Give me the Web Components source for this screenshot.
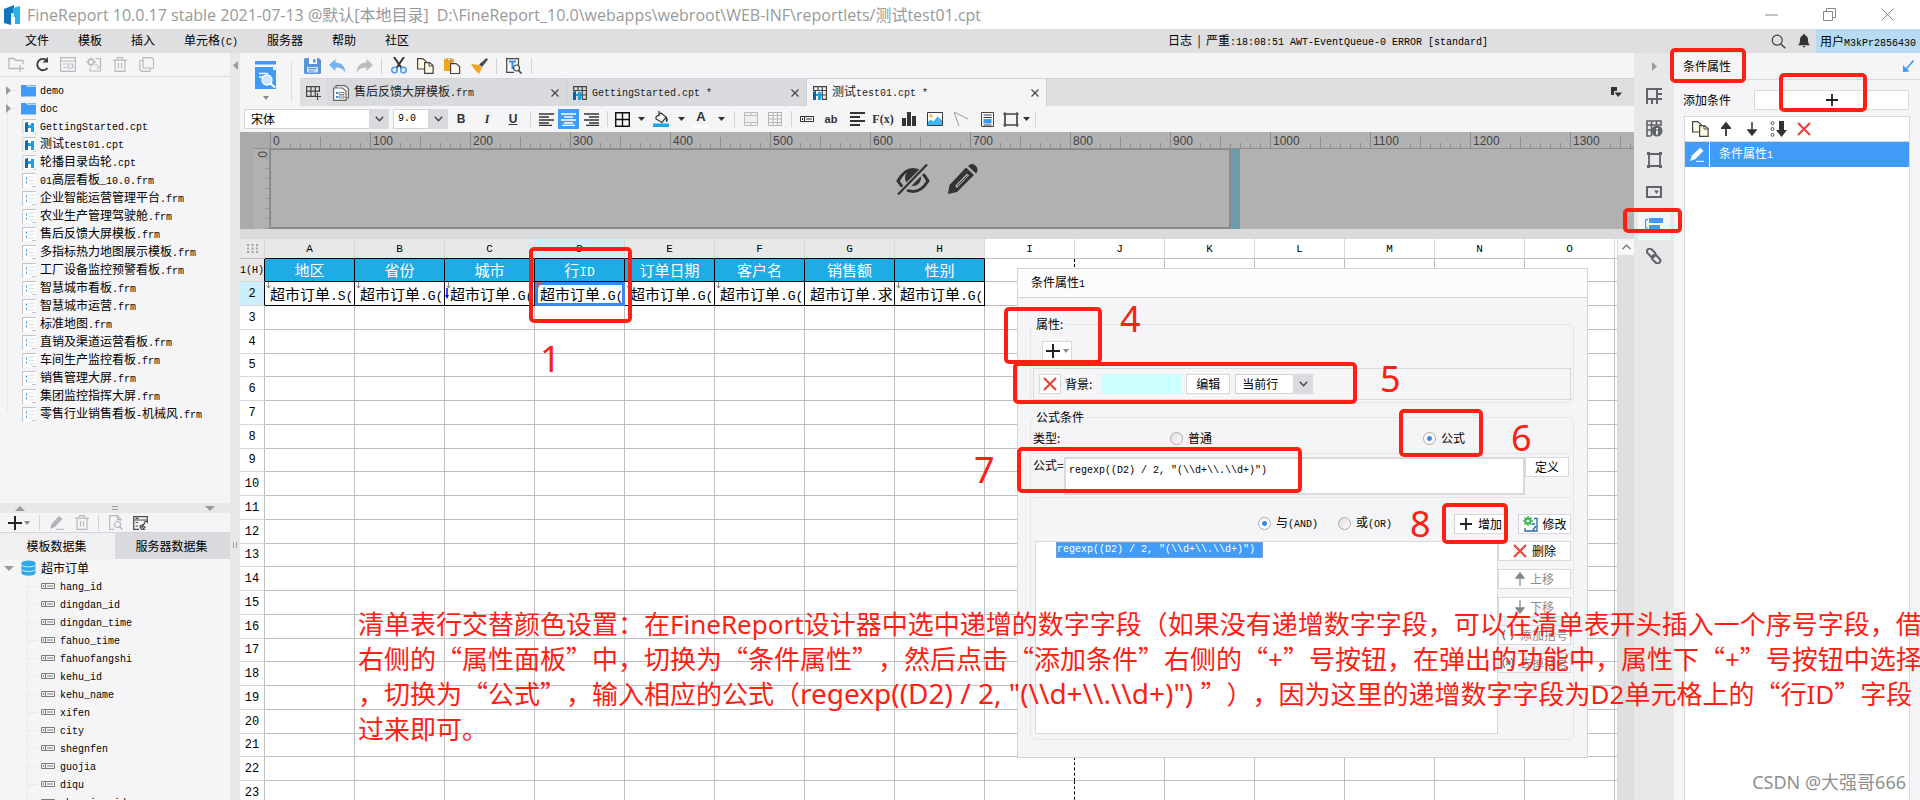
<!DOCTYPE html>
<html lang="zh-CN">
<head>
<meta charset="utf-8">
<title>FineReport</title>
<style>
html,body{margin:0;height:100%}
body{overflow:hidden;font:12px/18px "Noto Sans CJK SC","Noto Sans",sans-serif;color:#000;background:#fff}
</style>
</head>
<body>
<report-designer></report-designer>
<script>
const BASE=`
*{box-sizing:border-box}
:host{display:block}
:host([hidden]){display:none}
svg{display:block}
button,select,input,textarea{font:inherit;color:inherit;margin:0}
button{border:0;background:none;padding:0;display:flex;align-items:center;justify-content:center}
a{color:inherit;text-decoration:none}
.l{font-family:"Liberation Mono",monospace;font-size:10px;font-style:normal}
.row{display:flex;align-items:center}
`;
/* Wraps runs of ASCII in a half-width monospace span. */
const mix=s=>s.replace(/[\x21-\x7e](?:[\x20-\x7e]*[\x21-\x7e])?/g,m=>'<span class="l">'+m.replace(/&/g,'&amp;').replace(/</g,'&lt;')+'</span>');
function define(name,css,html,setup){
  customElements.define(name,class extends HTMLElement{
    connectedCallback(){
      if(this.shadowRoot)return;
      const r=this.attachShadow({mode:'open'});
      r.innerHTML='<style>'+BASE+css+'</style>'+(typeof html==='function'?html(this):html);
      if(setup)setup(r,this);
    }
  });
}

/* Icon set: [width, height, markup] */
const ICONS={
logo:[16,20,'<path d="M0 4L10 0v8H7v12L0 18z" fill="#0f76bd"/><path d="M9 3l7-2v18h-5v-7H7V8h2z" fill="#2bb0ea"/><path d="M7 8h3v12l-3-1z" fill="#fff" opacity=".75"/>'],
folder:[15,13,'<path d="M0 1h5l2 2h8v9.5H0z" fill="#419bf9"/><path d="M6 1h9v1.500H8z" fill="#79b9fb"/>'],
cpt:[14,15,'<path d="M1 15V.5h13M14 12v3h-4" fill="none" stroke="#c4c4c6"/><path d="M1.500 1H14v11l-3 2.500H1.500z" fill="#fff"/><path d="M3 4l3-1v3h3V4h3v9H9V9H6v4H3z" fill="#1f9fe0"/><path d="M3 4l3-1v10H3z" fill="#0d6cb5"/>'],
frm:[14,15,'<path d="M1.500 1H14v11l-3 2.500H1.500z" fill="#fff"/><path d="M.5 15V.5H14M14 13.500h-4" fill="none" stroke="#c4c4c6"/><path d="M6.500 4h6M6.500 7.500h6M6.500 11h6" stroke="#dedee2"/><path d="M4 4.500h1v2H4zM4 8.500h1v2H4z" fill="#2c8fe0"/>'],
field:[14,6,'<path d="M.5.5h13v5H.5zM4.500 1v4M6 3h6" fill="none" stroke="#7c7c7c"/><path d="M2 2h1v2H2z" fill="#7c7c7c"/>'],
db:[15,16,'<path d="M.5 3v10c0 3.500 14 3.500 14 0V3z" fill="#2fa6e6"/><ellipse cx="7.500" cy="3" rx="7" ry="2.500" fill="#2fa6e6"/><path d="M.5 5c1 2.500 13 2.500 14 0M.5 9.500c1 2.500 13 2.500 14 0" fill="none" stroke="#d8effb"/>'],
newdir:[16,16,'<path d="M9 12.500H1v-10h5l1.500 2H15V8M12 9v7M8.500 12.500H16" transform="translate(0 -1)" fill="none" stroke="#b9b9bd" stroke-width="1.300"/>'],
refresh:[15,15,'<path d="M12 3.500A5.700 5.700 0 1 0 12.500 11" fill="none" stroke="#3a3a3c" stroke-width="1.800"/><path d="M13 0v5.500H7.500z" fill="#3a3a3c"/>'],
winlist:[16,15,'<path d="M.7.7h14.600v13.600H.7zM.7 4h14.600M3 7h3M3 10.500h3M8 7h4.500v4H8z" fill="none" stroke="#b9b9bd" stroke-width="1.200"/>'],
gearfile:[16,16,'<circle cx="5" cy="5" r="2.800" fill="none" stroke="#b9b9bd" stroke-width="1.500"/><path d="M5 0v10M0 5h10M1.500 1.500l7 7M8.500 1.500l-7 7" stroke="#b9b9bd" stroke-dasharray="1.800 6.400"/><path d="M10 1.500h4.500v12.500H4V11M11 12l2.500-3M9 8h3" fill="none" stroke="#b9b9bd" stroke-width="1.200"/>'],
trash:[14,15,'<path d="M0 3.200h14M4.500 3V.7h5V3M2 3.500v10.800h10V3.500M5.500 6v5.500M8.500 6v5.500" fill="none" stroke="#b9b9bd" stroke-width="1.200"/>'],
copygray:[15,15,'<path d="M4 .7h8.500l2 2V11H4zM4 3.500H.8v9l2 1.800H11V11" fill="none" stroke="#b9b9bd" stroke-width="1.200"/>'],
pencilgray:[14,15,'<path d="M0 14l1.500-5L9 1l3.500 3L5 12z" fill="#b4b4b8"/><path d="M6 14.300h8" stroke="#b4b4b8"/>'],
filefind:[14,15,'<path d="M12 6V4.500L8.500.7H.7v13.600H5M8.500.7v4H12" fill="none" stroke="#b9b9bd" stroke-width="1.200"/><circle cx="8.500" cy="9.500" r="3" fill="none" stroke="#b9b9bd" stroke-width="1.200"/><path d="M10.500 11.500l3 3" stroke="#b9b9bd" stroke-width="1.500"/>'],
dsmenu:[15,14,'<path d="M14.300 6V.7H.7v12.600H6M.7 4h13.600M2.500 2.300h3M2.500 6.500h2.500M2.500 10h2.500" fill="none" stroke="#4a4a4c" stroke-width="1.200"/><path d="M8 11l4-4M9 8.500l3.500 3.500M7.500 9.500a3 3 0 0 0 4 4zM11 6.500a2.500 2.500 0 0 1 4 3.500" fill="none" stroke="#4a4a4c" stroke-width="1.100"/>'],
plus:[14,14,'<path d="M7 0v14M0 7h14" stroke="#222" stroke-width="2"/>'],
plus12:[12,12,'<path d="M6 0v12M0 6h12" stroke="#222" stroke-width="1.800"/>'],
tri:[7,4,'<path d="M0 0h7L3.500 4z" fill="#333"/>'],
trig:[6,4,'<path d="M0 0h6L3 4z" fill="#8a8a8a"/>'],
trir:[5,9,'<path d="M0 0l5 4.500L0 9z" fill="#9b9b9b"/>'],
tril:[5,9,'<path d="M5 0L0 4.500 5 9z" fill="#9b9b9b"/>'],
triup:[10,5,'<path d="M0 5l5-5 5 5z" fill="#9b9b9b"/>'],
tridn:[10,5,'<path d="M0 0l5 5 5-5z" fill="#9b9b9b"/>'],
chev:[9,6,'<path d="M.8.8L4.500 4.800 8.200.8" fill="none" stroke="#444" stroke-width="1.400"/>'],
chevup:[9,6,'<path d="M.5 5.200L4.500 1l4 4.200" fill="none" stroke="#666" stroke-width="1.200"/>'],
x:[8,8,'<path d="M.5.5l7 7M7.500.5l-7 7" stroke="#444" stroke-width="1.200"/>'],
redx:[14,14,'<path d="M1 1l12 12M13 1L1 13" stroke="#e8453c" stroke-width="2.200"/>'],
min:[13,2,'<path d="M0 1h13" stroke="#888"/>'],
max:[13,13,'<path d="M.5 3.500h9v9h-9zM3.500 3V.5h9v9H10" fill="none" stroke="#888"/>'],
close:[13,13,'<path d="M.5.5l12 12M12.500.5l-12 12" stroke="#888"/>'],
search:[15,15,'<circle cx="6.200" cy="6.200" r="5" fill="none" stroke="#444" stroke-width="1.200"/><path d="M10 10l4.300 4.300" stroke="#444" stroke-width="1.400"/>'],
bell:[12,14,'<path d="M6 0c.8 0 1 .5 1 1.200C9.500 2 10 4 10 6c0 3 .8 4 2 5.200H0C1.200 10 2 9 2 6c0-2 .5-4 3-4.800C5 .5 5.200 0 6 0zM4.500 12h3L6 13.800z" fill="#333"/>'],
preview:[21,28,'<path d="M0 0h21v3.500H0zM0 6h18l3 3v19H0z" fill="#419bf9"/><path d="M18 6v3h3z" fill="#fff"/><path d="M4 12.500h9M4 16h4" stroke="#fff" stroke-width="1.500"/><circle cx="12" cy="19" r="5" fill="#cfe5fd" stroke="#fff" stroke-width="1.300"/><path d="M15.500 22.500l4.500 4" stroke="#fff" stroke-width="2"/>'],
save:[17,16,'<path d="M0 1.500Q0 0 1.500 0h13L17 2v12.500q0 1.500-1.500 1.500h-14Q0 16 0 14.500z" fill="#5b93db"/><path d="M5 0h8v6H5z" fill="#fff"/><path d="M9 1h2.500v3.500H9z" fill="#5b93db"/><path d="M3 9h11v5.500H3z" fill="#d6e6f8"/><path d="M4.500 10.700h8M4.500 13h6" stroke="#5b93db" stroke-width="1.200"/>'],
undo:[17,14,'<path d="M6.500 0v3.500c6 0 9.500 3.500 10 10.500-2-4-5-5.500-10-5.500V12L0 6z" fill="#78b2ee"/>'],
redo:[17,14,'<path d="M10.500 0v3.500C4.500 3.500 1 7 .5 14c2-4 5-5.500 10-5.500V12L17 6z" fill="#bcbcbe"/>'],
cut:[16,17,'<path d="M3 0l7.500 11M13 0L5.500 11" stroke="#333" stroke-width="2"/><circle cx="3.500" cy="13" r="2.700" fill="none" stroke="#4a9cf0" stroke-width="1.600"/><circle cx="12.500" cy="13" r="2.700" fill="none" stroke="#4a9cf0" stroke-width="1.600"/>'],
copy:[17,16,'<path d="M.6.6h5l3.500 3V11H.6z" fill="#fff8e3" stroke="#444" stroke-width="1.200"/><path d="M7.600 4.600h5l3.500 3v7.800H7.600z" fill="#fff8e3" stroke="#444" stroke-width="1.200"/><path d="M12 5v3h4" fill="none" stroke="#444"/>'],
paste:[17,16,'<path d="M0 1h10v12H0z" fill="#f2a71b"/><path d="M3 0h4v3H3z" fill="#fff" stroke="#b77d12"/><path d="M6.600 5.600h5.500l3.500 3v7H6.600z" fill="#fffaf0" stroke="#444" stroke-width="1.200"/>'],
brush:[17,16,'<path d="M15.500 0L17 1.500 11 9 8 6.500z" fill="#4a4a4a"/><path d="M0 6l8 1 3 3-3 6L4 12z" fill="#f4a21a"/>'],
find:[16,16,'<path d="M12.500 7V.7H.7v13.600H8" fill="none" stroke="#444" stroke-width="1.200"/><path d="M3 3.500h7M6.500 3.500V11" stroke="#3b8ee8" stroke-width="2"/><circle cx="10.500" cy="10" r="3" fill="#f5f5f7" stroke="#444" stroke-width="1.200"/><path d="M12.500 12.500l3 3" stroke="#444" stroke-width="1.600"/>'],
tablist:[15,14,'<path d="M9 10.300H.6V.6h12.800V6M.6 5.200h13M5 1v9M9.300 1v9M11.500 7v7M8 10.500h7" fill="none" stroke="#444" stroke-width="1.200"/>'],
tabfrm:[16,16,'<path d="M3 3V.6h9l3.400 3V13H13M.6 3h9l3.400 3v9.400H.6z" fill="#fff" stroke="#666" stroke-width="1.200"/><path d="M3 7h2v2H3zM3 11h2v2H3z" fill="#2c8fe0"/><path d="M6 7.500h5v2H6zM6 11h5v2H6z" fill="none" stroke="#888"/>'],
tabcpt:[14,14,'<path d="M.6 5V.6h12.800v12.800H9M.6 4.500h13M5 1v4M9.300 1v12M8 9h5" fill="none" stroke="#444" stroke-width="1.200"/><path d="M0 6l3-1v3h2V6h3v8H5v-4H3v4H0z" fill="#1f9fe0"/><path d="M0 6l3-1v9H0z" fill="#0d5fae"/>'],
dropwin:[11,11,'<path d="M0 0h6v4H3v4H0z" fill="#333"/><path d="M3.500 5.500H11L7.200 10z" fill="#333"/>'],
alignl:[15,13,'<path d="M0 1h15M0 4h10M0 7h15M0 10h10M0 12.500h13" stroke="#333" stroke-width="1.300"/>'],
alignc:[15,13,'<path d="M0 1h15M3 4h9M0 7h15M3 10h9M1 12.500h13" stroke="#fff" stroke-width="1.300"/>'],
alignr:[15,13,'<path d="M0 1h15M5 4h10M0 7h15M5 10h10M2 12.500h13" stroke="#333" stroke-width="1.300"/>'],
border:[15,15,'<path d="M.7.7h13.600v13.600H.7zM7.500 1v13M1 7.500h13" fill="none" stroke="#111" stroke-width="1.400"/>'],
fill:[16,16,'<path d="M3 6l5-4 5 4-4 5.500L3 8zM6 0v5" fill="none" stroke="#333" stroke-width="1.200"/><path d="M13 5q3 4 1 6-2 0-1-6z" fill="#333"/><path d="M0 12.500h16V16H0z" fill="#1ba8e8"/>'],
merge:[14,14,'<path d="M.5.5h13v13H.5zM.5 3.500h13M.5 10.500h13M7 .5v3M7 10.500v3" fill="#f0f0f2" stroke="#bdbdc0"/>'],
unmerge:[14,14,'<path d="M.5.5h13v13H.5zM.5 3.500h13M.5 7h13M.5 10.500h13M5 .5v13M9.500.5v13" fill="none" stroke="#b5b5b8"/>'],
fieldb:[14,6,'<path d="M.5.5h13v5H.5zM4.500 1v4M6 3h6" fill="none" stroke="#333"/><path d="M2 2h1v2H2z" fill="#333"/>'],
lines:[15,14,'<path d="M0 1h15M0 5h10M0 9h15M0 13h10" stroke="#333" stroke-width="1.800"/>'],
bars:[14,14,'<path d="M0 6h4v8H0zM5 0h4v14H5zM10 4h4v10h-4z" fill="#333"/>'],
image:[16,14,'<path d="M.5.5h15v13H.5z" fill="#fff" stroke="#3a3a3a"/><circle cx="4" cy="4" r="1.800" fill="#f9c04a"/><path d="M1 13V9.500l3-2 2.500 2 4-5 4.500 4V13z" fill="#3bb6f2"/>'],
slash:[14,14,'<path d="M0 0l5 14M0 0l14 7" fill="none" stroke="#999"/>'],
rich:[13,15,'<path d="M.5.500h12v14H.5z" fill="#fff" stroke="#444"/><path d="M2.500 3h8M2.500 5.500h8M2.500 13h8" stroke="#333"/><path d="M2.500 7h8v4.500h-8z" fill="#3b9df2"/>'],
rect:[16,15,'<path d="M2 2h12v11H2z" fill="none" stroke="#444" stroke-width="1.200"/><path d="M2 0v15M14 0v15M0 2h16M0 13h16" stroke="#444" stroke-width="1.200"/>'],
eye:[34,31,'<path d="M2 17C7 8 13 5.500 17 5.500S27 8 32 17c-5 8-11 10.500-15 10.500S7 25 2 17z" fill="#b1b1b1" stroke="#333" stroke-width="3"/><circle cx="17" cy="14" r="8" fill="#333"/><path d="M3 30L31 2" stroke="#b1b1b1" stroke-width="6"/><path d="M2 30.500L31 .5" stroke="#333" stroke-width="2.200"/>'],
bigpencil:[31,31,'<path d="M1 30l1.500-9L19 3.500l8 7.500-17 17z" fill="#333"/><path d="M8 22L20 9.500l2 2L10 24z" fill="#b1b1b1"/><path d="M10 22l10.500-10.500" stroke="#333"/><path d="M21 2q4-4 8 0 3 3.500 0 7.500z" fill="#333"/>'],
cellattr:[16,16,'<path d="M1 1h10v10H1z" fill="none" stroke="#60626c" stroke-width="2"/><path d="M11 1h5M11 6h5M11 11h5M1 10v6M6 10v6M11 10v6" stroke="#60626c" stroke-width="2"/>'],
cellinfo:[17,17,'<path d="M5 16H1V1h14v4M1 5h5M1 10h4M5.500 1v15M10.500 1v4M6 5h10" fill="none" stroke="#60626c" stroke-width="1.600"/><circle cx="11" cy="11" r="5.500" fill="#60626c"/><path d="M11 8v1.500M11 10.500v4" stroke="#e8e8e8" stroke-width="2"/>'],
floatrect:[15,16,'<path d="M2 2h11v12H2z" fill="none" stroke="#60626c" stroke-width="1.800"/><path d="M0 0h3v3H0zM12 0h3v3h-3zM0 13h3v3H0zM12 13h3v3h-3z" fill="#60626c"/>'],
widget:[16,12,'<path d="M1 1h14v10H1z" fill="none" stroke="#60626c" stroke-width="2"/><path d="M8 4.500h5L10.500 8z" fill="#60626c"/>'],
cond:[18,12,'<path d="M3 1.600H.6v8.400H3" fill="none" stroke="#419bf9" stroke-width="1.200"/><path d="M4 0h14v5H4zM4 7h11v5H4z" fill="#419bf9"/>'],
link:[16,16,'<g transform="rotate(45 8 8)" fill="none" stroke="#60626c" stroke-width="2"><rect x="-1" y="5" width="9.500" height="5.500" rx="2.700"/><rect x="7" y="6" width="9.500" height="5.500" rx="2.700"/></g>'],
dock:[11,12,'<path d="M10.500.500L2 10.500" stroke="#419bf9" stroke-width="1.600"/><path d="M0 12V5l6.500 6.500z" fill="#419bf9"/>'],
up:[10,14,'<path d="M5 14V2M1 6l4-5 4 5z" fill="#333" stroke="#333" stroke-width="1.800"/>'],
down:[10,14,'<path d="M5 0v12M1 8l4 5 4-5z" fill="#333" stroke="#333" stroke-width="1.500"/>'],
upg:[10,14,'<path d="M5 14V2M1 6l4-5 4 5z" fill="#888" stroke="#888" stroke-width="1.300"/>'],
downg:[10,14,'<path d="M5 0v12M1 8l4 5 4-5z" fill="#888" stroke="#888" stroke-width="1.300"/>'],
sort:[17,16,'<circle cx="2.500" cy="2.200" r="1.500" fill="none" stroke="#555"/><circle cx="2.500" cy="8" r="1.500" fill="none" stroke="#555"/><circle cx="2.500" cy="13.800" r="1.500" fill="none" stroke="#555"/><path d="M9 0h5v9h3l-5.500 7L6 9h3z" fill="#333"/>'],
editw:[15,15,'<path d="M0 14l2-5.500L10 .8l3.500 3L5.500 12z" fill="#fff"/><path d="M6 14.300h8" stroke="#fff"/>'],
modify:[15,16,'<circle cx="5" cy="5" r="2.600" fill="none" stroke="#35b14a" stroke-width="2"/><path d="M5 0v10M0 5h10M1.500 1.500l7 7M8.500 1.500l-7 7" stroke="#35b14a" stroke-width="1.600" stroke-dasharray="1.800 6.400"/><path d="M11 2.500h3v12.500H2V12M9 8h3M10 14l3-4" fill="none" stroke="#1c6cab" stroke-width="1.300"/>'],
paren:[14,12,'<path d="M4 1Q0 6 4 11M10 1q4 5 0 10" fill="none" stroke="#888" stroke-width="1.600"/>'],
parenx:[14,12,'<path d="M4 1Q0 6 4 11M10 1q4 5 0 10M5 4l4 4M9 4L5 8" fill="none" stroke="#888" stroke-width="1.400"/>'],
dots:[11,9,'<path d="M0 1h11M0 4.500h11M0 8h11" stroke="#a4a4a4" stroke-width="2" stroke-dasharray="2 2.500"/>'],
grip:[6,4,'<path d="M0 .5h6M0 3.500h6" stroke="#a0a0a0"/>'],
gripv:[4,6,'<path d="M.5 0v6M3.500 0v6" stroke="#a0a0a0"/>'],
mark:[5,7,'<path d="M2.500 0v6M.5 3.500l2 2.500 2-2.500" fill="none" stroke="#888"/>'],
markr:[5,7,'<path d="M0 0h5L2.500 6z" fill="#d05555"/>'],
blue:[4,11,'<path d="M2 0v9" stroke="#00f" stroke-width="1.500"/><path d="M0 7h4L2 11z" fill="#00f"/>']
};
define('fr-icon',':host{flex:none}',el=>{
  const [w,h,m]=ICONS[el.getAttribute('name')];
  return `<svg width="${w}" height="${h}" viewBox="0 0 ${w} ${h}" aria-hidden="true">${m}</svg>`;
});
const ic=n=>`<fr-icon name="${n}"></fr-icon>`;
const ib=(n,w=24,label=n)=>`<button aria-label="${label}" style="width:${w}px">${ic(n)}</button>`;

define('title-bar',`
:host{display:flex;align-items:center;height:29px;background:#fff;color:#999;font:16px/24px "Open Sans","Noto Sans CJK SC",sans-serif;padding:0 26px 0 4px;white-space:pre;flex:none}
.t{margin-left:7px}.p{margin-left:8px;flex:1}
.w{display:flex;gap:45px}`,
`${ic('logo')}<span class="t">FineReport 10.0.17 stable 2021-07-13 @默认[本地目录]</span><span class="p">D:\\FineReport_10.0\\webapps\\webroot\\WEB-INF\\reportlets/测试test01.cpt</span><div class="w">${['min','max','close'].map(n=>ib(n,13)).join('')}</div>`);

define('menu-bar',`
:host{display:flex;align-items:center;height:24px;background:#dfdfe1;flex:none}
nav{display:flex;gap:29px;padding-left:25px;flex:1}
.log{width:603px;white-space:pre}
.i{display:flex;gap:12px;width:45px;align-items:center}
.u{background:#b6dbf2;height:24px;line-height:24px;width:104px;padding-left:4px}`,
`<nav>${['文件','模板','插入','单元格(C)','服务器','帮助','社区'].map(t=>`<a href="#">${mix(t)}</a>`).join('')}</nav>
<div class="log"><span>日志</span>  |  <span>严重${mix(':18:08:51 AWT-EventQueue-0 ERROR [standard]')}</span></div>
<div class="i">${ic('search')}${ic('bell')}</div><div class="u">用户${mix('M3kPr2856430')}</div>`);

const FILES=[['folder','demo'],['folder','doc'],['cpt','GettingStarted.cpt'],['cpt','测试test01.cpt'],['cpt','轮播目录齿轮.cpt'],['frm','01高层看板_10.0.frm'],['frm','企业智能运营管理平台.frm'],['frm','农业生产管理驾驶舱.frm'],['frm','售后反馈大屏模板.frm'],['frm','多指标热力地图展示模板.frm'],['frm','工厂设备监控预警看板.frm'],['frm','智慧城市看板.frm'],['frm','智慧城市运营.frm'],['frm','标准地图.frm'],['frm','直销及渠道运营看板.frm'],['frm','车间生产监控看板.frm'],['frm','销售管理大屏.frm'],['frm','集团监控指挥大屏.frm'],['frm','零售行业销售看板-机械风.frm']];
define('file-tree',`
:host{flex:none}
.bar{height:24px;padding-left:3px;border-bottom:1px solid #d9d9dc}
ul{margin:0;padding:4px 0 0;list-style:none;height:426px;background:linear-gradient(#e9e9ec,#e9e9ec) 7px 14px/1px 320px no-repeat}
li{display:flex;align-items:center;height:18px;white-space:pre}
.a{width:22px;padding-left:6px;background:linear-gradient(#e9e9ec,#e9e9ec) 8px 50%/9px 1px no-repeat}
.d .a{width:21px}
fr-icon+span{margin-left:4px}`,
`<div class="bar row">${['newdir','refresh','winlist','gearfile','trash','copygray'].map(n=>ib(n,26)).join('')}</div><ul>${FILES.map(([k,t])=>`<li class="${k=='folder'?'d':'f'}"><span class="a">${k=='folder'?ic('trir'):''}</span>${ic(k)}<span>${mix(t)}</span></li>`).join('')}</ul>`);

define('dataset-panel',`
:host{flex:1;overflow:hidden}
.split{height:10px;background:#e8e8e8;justify-content:space-between;padding:0 15px}
.bar{height:20px;border-bottom:1px solid #d4d4d8;padding-left:8px}
.bar>fr-icon+fr-icon{margin-left:2px}
.sep{width:1px;height:16px;background:#d4d4d8;margin:0 9px}
.tabs{display:grid;grid-template-columns:1fr 1fr;height:26px}
.tabs button:last-child{background:#d8dadd}.tabs button{background:#f0f0f2;padding-right:2px}
ul{margin:0;padding:0;list-style:none}
li{display:flex;align-items:center;height:18px;padding-left:41px;background:linear-gradient(#e9e9ec,#e9e9ec) 27px 0/1px 18px no-repeat,linear-gradient(#e9e9ec,#e9e9ec) 28px 50%/9px 1px no-repeat}
li.r{padding-left:4px;background:none}
li>span{margin-left:5px}.r fr-icon+fr-icon{margin-left:7px}`,
`<div class="split row">${ic('triup')}${ic('grip')}${ic('tridn')}</div>
<div class="bar row">${ic('plus')}${ic('trig')}<span class="sep"></span>${ib('pencilgray',15)}<span style="width:10px"></span>${ib('trash',15)}<span class="sep"></span>${ib('filefind',15)}<span style="width:9px"></span>${ib('dsmenu',16)}</div>
<div class="tabs"><button>模板数据集</button><button>服务器数据集</button></div>
<ul><li class="r">${ic('tridn')}${ic('db')}<span>超市订单</span></li>${['hang_id','dingdan_id','dingdan_time','fahuo_time','fahuofangshi','kehu_id','kehu_name','xifen','city','shegnfen','guojia','diqu','chanping_id'].map(t=>`<li>${ic('field')}<span>${mix(t)}</span></li>`).join('')}</ul>`);

define('side-gutter',`
:host{display:flex;flex-direction:column;align-items:center;width:10px;background:#e8e8e8;flex:none;padding-top:8px}
.g{margin-top:472px}`,`${ic('tril')}<span class="g">${ic('gripv')}</span>`);

define('quick-tools',`
:host{display:flex;background:#f5f5f7;flex:none}
.big{width:51px;flex-direction:column;padding-top:8px;justify-content:flex-start;gap:7px}
.s{width:1px;background:#dedee2;height:40px;margin:8px 8px 0 0}
.r{flex:1;min-width:0}
.bar{height:25px}
.sep{width:1px;height:16px;background:#d4d4d8;margin:0 4px}`,
`<button class="big" aria-label="preview">${ic('preview')}${ic('trig')}</button><span class="s"></span>
<div class="r"><div class="bar row">${ib('save',24)}${ib('undo',27)}${ib('redo',26)}<span class="sep"></span>${ib('cut',26)}${ib('copy',27)}${ib('paste',27)}${ib('brush',26)}<span class="sep"></span>${ib('find',26)}<span class="sep"></span></div><file-tabs></file-tabs></div>`);

define('file-tabs',`
:host{display:flex;height:28px;background:#dfdfe1;padding-right:12px;border-top:1px solid #d4d4d8}
.tab{display:flex;align-items:center;width:240px;padding:0 5px 0 6px;background:#d8dadd;border-right:1px solid #cfcfd3;color:#222}
.tab.on{background:#f5f5f7}
.tab>span{flex:1;margin-left:5px;white-space:pre}
.e{flex:1}`,
`${ib('tablist',27)}${[['tabfrm','售后反馈大屏模板.frm'],['tabcpt','GettingStarted.cpt *'],['tabcpt','测试test01.cpt *']].map(([i,t],n)=>`<div class="tab ${n==2?'on':''}">${ic(i)}<span>${mix(t)}</span>${ib('x',12,'close')}</div>`).join('')}<span class="e"></span>${ib('dropwin',12)}`);

define('combo-box',`
:host{display:flex;position:relative;height:20px;background:#fff;border:1px solid #d4d4d8}
select{appearance:none;border:0;background:none;width:100%;padding:0 22px 0 6px;outline:0;line-height:18px}
:host([mono]) select{font:10px/18px "Liberation Mono",monospace;padding-left:4px}
.a{position:absolute;right:-1px;top:-1px;width:20px;height:20px;background:#d8dadd;display:flex;align-items:center;justify-content:center;pointer-events:none}`,
el=>`<select aria-label="${el.getAttribute('label')}"><option>${el.getAttribute('value')}</option></select><span class="a">${ic('chev')}</span>`);

define('format-bar',`
:host{display:flex;align-items:center;height:26px;background:#f5f5f7;padding-left:4px;flex:none}
.f{width:145px;margin-right:4px}.z{width:55px}
.b{font:bold 12px/18px "Liberation Sans";width:26px;color:#333}
.sep{width:1px;height:16px;background:#d4d4d8;margin:0 4px}
.on{background:#419bf9;width:21px;height:20px}
.A{flex-direction:column;font:bold 13px/11px "Liberation Sans";width:22px;color:#333}.A i{width:16px;height:3px;background:#fff;margin-top:3px}
.fx{font:bold 12px/18px "Liberation Serif";width:26px;color:#333}`,
`<combo-box class="f" value="宋体" label="字体"></combo-box><combo-box class="z" mono value="9.0" label="字号"></combo-box>
<button class="b">B</button><button class="b" style="font-style:italic;font-family:Liberation Serif">I</button><button class="b" style="text-decoration:underline">U</button><span class="sep"></span>${ib('alignl',23)}<button class="on" aria-label="center">${ic('alignc')}</button>${ib('alignr',24)}<span class="sep"></span>
${ib('border',20)}${ib('tri',18)}${ib('fill',22)}${ib('tri',18)}<button class="A">A<i></i></button>${ib('tri',18)}<span class="sep"></span>${ib('merge',24)}${ib('unmerge',24)}<span class="sep"></span>
${ib('fieldb',22)}<button class="b" style="font-size:11px">ab</button>${ib('lines',26)}<button class="fx">F(x)</button>${ib('bars',26)}${ib('image',26)}${ib('slash',26)}${ib('rich',26)}${ib('rect',22)}${ib('tri',9)}<span class="sep"></span>`);

define('form-canvas',`
:host{display:grid;grid-template-columns:13px 17px 1fr;grid-template-rows:17px 80px;background:#aaa;flex:none;overflow:hidden}
.top{grid-column:3;display:flex;overflow:hidden;border-bottom:1px solid #8f8f8f;
background:repeating-linear-gradient(90deg,#8a8a8a 0 1px,transparent 1px 100px) 0 0/100% 17px no-repeat,repeating-linear-gradient(90deg,#8f8f8f 0 1px,transparent 1px 50px) 0 5px/100% 12px no-repeat,repeating-linear-gradient(90deg,#8f8f8f 0 1px,transparent 1px 10px) 0 11px/100% 6px no-repeat,#b1b1b1}
.top span{flex:0 0 100px;font:12px/18px "Liberation Sans";color:#444}
.top i{font-style:normal;background:#b1b1b1;margin-left:1px;padding:0 2px}
.left{grid-column:2;grid-row:2;border-right:1px solid #8f8f8f;border-top:1px solid #8f8f8f;background:repeating-linear-gradient(#999 0 1px,transparent 1px 10px) 12px 9px/4px 100% no-repeat,#b1b1b1;font:12px/14px "Liberation Sans";color:#444;writing-mode:vertical-rl;padding-top:2px;margin-top:-1px}
.body{grid-column:3;grid-row:2;display:flex;background:#b1b1b1}
.pg{width:961px;border:1px solid #8a8a8a;border-width:1px 2px 2px 1px;display:flex;justify-content:center;gap:17px;padding:14px 0 0 373px}
.teal{width:9px;background:#6e9ca8}`,
`<div class="top">${Array.from({length:14},(_,i)=>`<span><i>${i*100}</i></span>`).join('')}</div><div class="left">0</div><div class="body"><div class="pg">${ic('eye')}${ic('bigpencil')}</div><div class="teal"></div></div>`);

const HEAD=['地区','省份','城市','行ID','订单日期','客户名','销售额','性别'];
define('sheet-grid',`
:host{display:flex;flex:1;min-height:0;border-top:10px solid #dadadd;background:#fff}
.g{flex:1;min-width:0;overflow:hidden}
table{border-collapse:separate;border-spacing:0;table-layout:fixed;width:100%;font:12px/16px "Noto Sans CJK SC",sans-serif}
th,td{padding:0;border-right:1px solid #bfbfbf;border-bottom:1px solid #bfbfbf;overflow:hidden;white-space:nowrap;font-weight:400;text-align:center}
td:last-child,thead th:last-child{border-right:0}
tr{height:24px}tbody tr:nth-child(4n+1){height:23px}thead tr{height:20px}
thead th{font-family:"Liberation Mono";font-size:11px;line-height:18px;border-right-color:#d9d9d9}
tbody th{font:12px/14px "Liberation Mono";border-bottom-color:#d9d9d9}
thead th.n{border-bottom-color:#000}tbody tr:nth-child(-n+2) th{border-right-color:#000}
.dt{display:flex;justify-content:center}
.h{background:#e8e8e8}.s{background:#cbeffb}
.t{background:#1face5;color:#fff;font-size:15px;line-height:22px}
.t,.v{border-color:#000}
.t .l,.v .l{font-size:13px;line-height:1}
.v{font-size:15px;line-height:22px;text-align:left;position:relative}
.v span.w{margin-left:5px;display:block;height:22px}
.v fr-icon{position:absolute;left:1px;top:0}.v fr-icon+fr-icon{left:0;top:6px}
.sel{outline:3px solid #3b87f0;outline-offset:-3px}
.pb{border-right:1px dashed #000}
.bar{width:17px;border-left:1px solid #dcdcdc;background:#dfdfdf}
.bar div{height:16px;background:#f7f7f9;display:flex;align-items:center;justify-content:center}`,
()=>{
 const L='ABCDEFGHIJKLMNO'.split('');
 let h='<div class="g"><table><colgroup><col style="width:25px">'+L.map(()=>'<col style="width:90px">').join('')+'<col></colgroup><thead><tr><th class="h"><span class="dt">'+ic('dots')+'</span></th>';
 h+=L.map((c,i)=>`<th class="${i==3?'s n':i<8?'h n':''}">${c}</th>`).join('')+'<th></th></tr></thead><tbody>';
 for(let r=1;r<=23;r++){
  h+=`<tr><th class="${r==1?'h':r==2?'s':''}">${r==1?mix('1(H)'):r}</th>`;
  for(let c=0;c<16;c++){
   if(c<8&&r==1)h+=`<td class="t">${mix(HEAD[c])}</td>`;
   else if(c<8&&r==2)h+=`<td class="v ${c==3?'sel':''}">${c==6?'':ic(c==3?'markr':'mark')}${c==2?ic('blue'):''}<span class="w">${mix(c==6?'超市订单.求':c==0?'超市订单.S(':'超市订单.G(')}</span></td>`;
   else h+=`<td${c==8?' class="pb"':''}></td>`;
  }
  h+='</tr>';
 }
 return h+`</tbody></table></div><div class="bar"><div>${ic('chevup')}</div></div>`;
});

define('tool-rail',`
:host{display:flex;flex-direction:column;align-items:center;width:40px;background:#e8e8e8;flex:none}
button{width:32px;height:32px}.a{height:27px}.on{background:#f5f5f7}`,
`<button class="a" aria-label="collapse">${ic('trir')}</button>${['cellattr','cellinfo','floatrect','widget','cond','link'].map(n=>`<button aria-label="${n}" class="${n=='cond'?'on':''}">${ic(n)}</button>`).join('')}`);

define('condition-panel',`
:host{display:flex;flex-direction:column;width:246px;background:#f5f5f7;flex:none}
.h{height:27px;padding:0 6px 0 9px;border-bottom:1px solid #d9d9dc;justify-content:space-between}
.add{height:20px;margin:10px 11px 6px 9px}.add label{width:71px}
.add button{flex:1;background:#fff;border:1px solid #d9d9dc;height:20px}
.list{flex:1;margin:0 10px;border:1px solid #d9d9dc;border-bottom:0;background:#fff}
.tb{height:25px;border-bottom:1px solid #d9d9dc;padding-left:2px}
.it{height:25px;background:#419bf9;color:#fff}
.it div{width:25px;height:25px;border-right:1px solid #fff;display:flex;align-items:center;justify-content:center}.it>span{margin-left:9px}`,
`<div class="h row"><span>条件属性</span>${ic('dock')}</div><div class="add row"><label for="a">添加条件</label><button id="a">${ic('plus12')}</button></div>
<div class="list"><div class="tb row">${ib('copy',26)}${ib('up',26)}${ib('down',26)}${ib('sort',26)}${ib('redx',26)}</div><div class="it row"><div>${ic('editw')}</div><span>条件属性${mix('1')}</span></div></div>`);

const FORMULA=String.raw`regexp((D2) / 2, "(\\d+\\.\\d+)")`;
define('condition-dialog',`
:host{position:absolute;left:1017px;top:268px;width:571px;height:490px;background:#f5f5f7;border:1px solid #d4d4d8}
header{height:29px;background:#fcfcfd;border-bottom:1px solid #d4d4d8;padding-left:13px;line-height:26px}
form{padding:18px 13px 0 12px}
fieldset{border:1px solid #e6e6e9;border-radius:6px;margin:0 0 6px;padding:0 2px;min-width:0}
legend{padding:0 3px;line-height:16px;height:16px}
.f1{height:87px}.f2{height:331px}
button{background:#fff;border:1px solid #d9d9dc;height:20px;line-height:18px}
.add{width:30px;margin:9px 0 7px 9px;gap:3px}
.attr{height:32px;border:1px solid #d9d9dc;padding-left:5px}
.attr .x{width:22px;margin-right:4px}
.cy{width:80px;height:20px;background:#ccffff;margin:0 5px 0 9px}
.e{width:44px;margin-right:5px}
.attr combo-box{width:78px}
.ty{height:28px;padding-bottom:2px}.ty label,.lg label{display:flex;align-items:center;gap:5px}
input{appearance:none;width:13px;height:13px;border:1px solid #a9a9ad;border-radius:50%;background:linear-gradient(135deg,#ddd,#fff)}
input:checked{background:radial-gradient(circle,#3b87f0 0 2px,#fff 3px)}
.ln{border-top:1px solid #e6e6e9}
.fm{display:flex;height:44px;padding-top:3px;align-items:flex-start}
.fm label{width:31px;line-height:16px;white-space:nowrap}
textarea{width:461px;height:38px;border:2px solid #d9d9dc;background:#fff;resize:none;padding:5px 3px;font:10px/14px "Liberation Mono",monospace;overflow:hidden;outline:0}
.df{width:44px}
.lg{height:44px;padding:8px 0 0 225px}
.lg .g1{margin-left:20px;width:116px}
.lg .b1{width:54px;gap:6px}.lg .b2{gap:5px;margin-left:10px;flex:1}
.bt{display:flex;margin-left:2px}
.tr{width:463px;height:193px;background:#fff;border:1px solid #d9d9dc;padding-left:20px}
.tr span{display:block;width:207px;height:16px;background:#419bf9;color:#fff;font:10px/14px "Liberation Mono";white-space:pre;border:1px solid #7a9fd8}
.sd{flex:1;display:grid;gap:8px;align-content:start}.sd button{gap:5px}
.sd .off{color:#8c8c8c}`,
`<header>条件属性${mix('1')}</header><form onsubmit="return false">
<fieldset class="f1"><legend>属性:</legend><button type="button" class="add" aria-label="添加属性">${ic('plus')}${ic('trig')}</button>
<div class="attr row"><button type="button" class="x" aria-label="移除">${ic('redx')}</button><span>背景:</span><span class="cy"></span><button type="button" class="e">编辑</button><combo-box value="当前行" label="范围"></combo-box></div></fieldset>
<fieldset class="f2"><legend>公式条件</legend>
<div class="ty row"><span style="width:137px">类型:</span><label style="width:253px"><input type="radio" name="k">普通</label><label><input type="radio" name="k" checked>公式</label></div>
<div class="fm ln"><label for="fx">公式=</label><textarea id="fx"></textarea><button type="button" class="df">定义</button></div>
<div class="lg ln row"><label><input type="radio" name="o" checked><span>与${mix('(AND)')}</span></label><label class="g1"><input type="radio" name="o"><span>或${mix('(OR)')}</span></label><button type="button" class="b1">${ic('plus12')}增加</button><button type="button" class="b2">${ic('modify')}修改</button></div>
<div class="bt"><div class="tr"><span></span></div><div class="sd">${[['redx','删除'],['upg','上移'],['downg','下移'],['paren','添加括号'],['parenx','去掉括号']].map(([i,t],n)=>`<button type="button" class="${n?'off':''}">${ic(i)}${t}</button>`).join('')}</div></div>
</fieldset></form>`,r=>{r.querySelector('textarea').value=FORMULA;r.querySelector('.tr span').textContent=FORMULA;});

define('red-box',`
:host{position:absolute;border:4px solid #fe2012;border-radius:5px;pointer-events:none}`,'',(r,el)=>{
  const [x,y,w,h]=el.getAttribute('at').split(' ');Object.assign(el.style,{left:x+'px',top:y+'px',width:w+'px',height:h+'px',boxSizing:'border-box'});});
define('red-step',`
:host{position:absolute;color:#fe2012;font:36px/36px "Noto Sans",sans-serif;width:20px;text-align:center}`,'<slot></slot>',(r,el)=>{
  const [x,y]=el.getAttribute('at').split(' ');Object.assign(el.style,{left:x+'px',top:y+'px'});});
define('red-note',`
:host{position:absolute;left:358px;top:605px;right:0;overflow:hidden;color:#fe2012;font:26px/35px "Noto Sans CJK SC",sans-serif;pointer-events:none;text-spacing-trim:space-all}
p{margin:0;white-space:pre;height:35px}i{font:26px/1 "Noto Sans",sans-serif}i.f{font-size:28px}`,
String.raw`<p>清单表行交替颜色设置：在<i>FineReport</i>设计器中选中递增的数字字段（如果没有递增数字字段，可以在清单表开头插入一个序号字段，借</p><p>右侧的“属性面板”中，切换为“条件属性”，然后点击“添加条件”右侧的“<i>+</i>”号按钮，在弹出的功能中，属性下“<i>+</i>”号按钮中选择</p><p>，切换为“公式”，输入相应的公式（<i class="f">regexp((D2) / 2, "(\\d+\\.\\d+)") </i>”），因为这里的递增数字字段为<i>D2</i>单元格上的“行<i>ID</i>”字段</p><p>过来即可。</p>`);
define('water-mark',`
:host{position:absolute;right:14px;bottom:6px;color:#8f8f8f;font:18px/24px "Noto Sans","Noto Sans CJK SC",sans-serif}`,'<slot></slot>');

define('report-designer',`
:host{display:flex;flex-direction:column;height:100vh;position:relative;overflow:hidden}
.w{flex:1;display:flex;min-height:0}
aside{width:230px;display:flex;flex-direction:column;background:#f5f5f7;flex:none}
main{flex:1;min-width:0;display:flex;flex-direction:column}`,
`<title-bar></title-bar><menu-bar></menu-bar><div class="w"><aside><file-tree></file-tree><dataset-panel></dataset-panel></aside><side-gutter></side-gutter>
<main><quick-tools></quick-tools><format-bar></format-bar><form-canvas></form-canvas><sheet-grid></sheet-grid></main><tool-rail></tool-rail><condition-panel></condition-panel></div>
<condition-dialog></condition-dialog>
${['1670 48 76 35','1779 73 88 39','1623 208 59 25','529 247 103 76','1004 307 98 57','1013 362 344 42','1399 409 84 48','1017 447 285 46','1442 503 66 41'].map(a=>`<red-box at="${a}"></red-box>`).join('')}
${[['1','540 341'],['4','1120 301'],['5','1380 361'],['6','1511 420'],['7','974 452'],['8','1410 506']].map(([t,a])=>`<red-step at="${a}">${t}</red-step>`).join('')}
<red-note></red-note><water-mark>CSDN @大强哥666</water-mark>`);
</script>
</body>
</html>
